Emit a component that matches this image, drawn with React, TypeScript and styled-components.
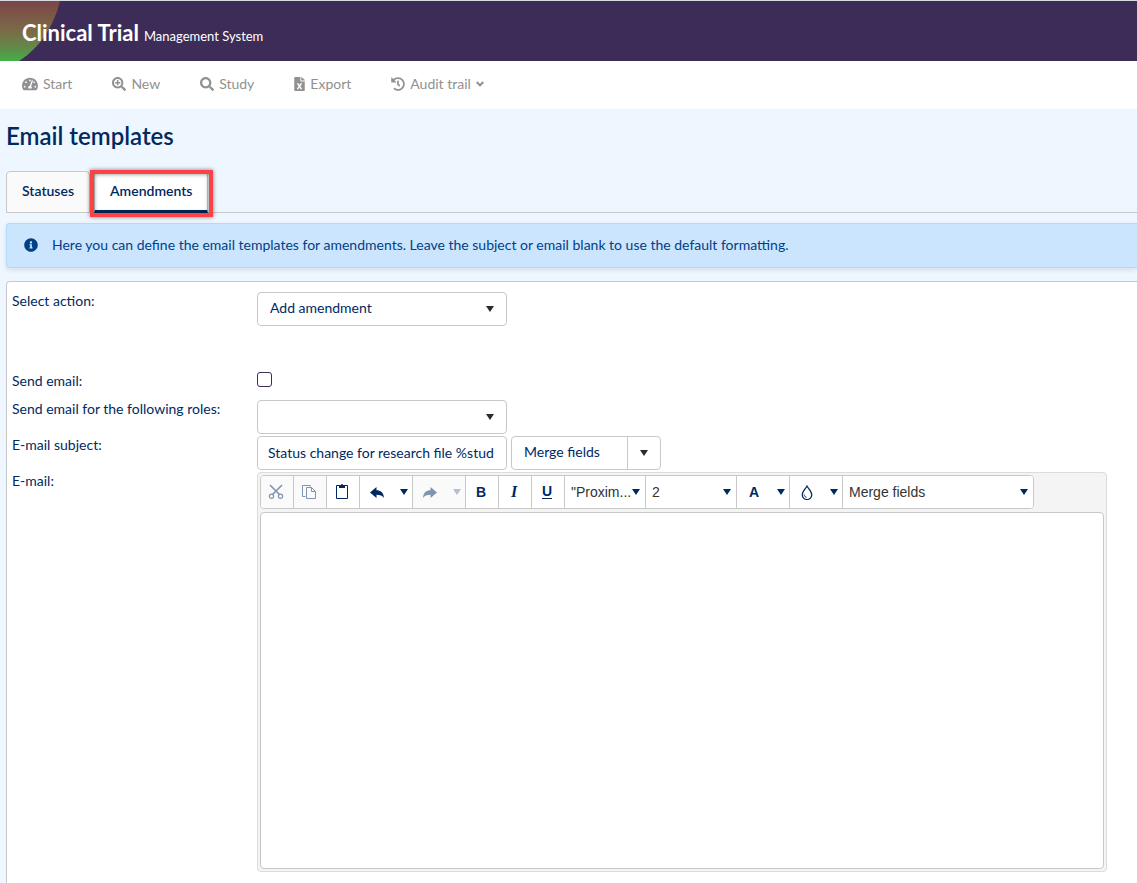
import React from "react";
import styled, { createGlobalStyle, css } from "styled-components";
import { FaTachometerAlt, FaSearchPlus, FaSearch, FaFileExcel, FaHistory, FaInfoCircle } from "react-icons/fa";

const navy = "#00295f";
const line = "#c8c8c8";
const uiFont = `Lato, "Open Sans", sans-serif`;

const GlobalStyle = createGlobalStyle`
  *, *::before, *::after { box-sizing: border-box; }
  body {
    margin: 0;
    background: #eef6ff;
    color: ${navy};
    font: 14px/20px ${uiFont};
    overflow-x: hidden;
  }
  button, input, select, textarea { font: inherit; color: inherit; margin: 0; }
`;

const Page = styled.div`
  display: flex;
  flex-direction: column;
  min-height: 100vh;
`;

const Header = styled.header`
  position: relative;
  display: flex;
  align-items: center;
  height: 61px;
  padding: 6px 22px 0;
  border-top: 1px solid #d5dcdf;
  background: #3d2c57;
  color: #fff;
  overflow: hidden;
`;

const Swirl = styled.svg`
  position: absolute;
  left: 0;
  top: 0;
`;

const Brand = styled.div`
  position: relative;
  display: flex;
  align-items: baseline;
  gap: 5px;
  font-size: 13px;
  line-height: 24px;
`;

const BrandName = styled.strong`
  font-size: 22px;
  font-weight: 700;
`;

const Nav = styled.nav`
  display: flex;
  align-items: center;
  gap: 40px;
  height: 48px;
  padding: 0 22px 2px;
  background: #fff;
`;

const NavLink = styled.a`
  display: flex;
  align-items: center;
  gap: 5px;
  color: #919191;
  text-decoration: none;
`;

const FileIcon = styled(FaFileExcel)`
  width: 11px;
  height: 14px;
`;

const Main = styled.main`
  flex: 1;
  display: flex;
  flex-direction: column;
  padding: 11px 0 0 6px;
`;

const Title = styled.h1`
  margin: 0 0 19px;
  font-size: 24px;
  line-height: 32px;
  font-weight: 600;
`;

const Tabs = styled.div`
  display: flex;
  height: 42px;
  border-bottom: 1px solid ${line};
`;

const Tab = styled.button<{ $active?: boolean }>`
  position: relative;
  height: 42px;
  padding: 0 15px 2px;
  border: 1px solid ${line};
  border-radius: 4px 4px 0 0;
  background: #fafafa;
  font-weight: 600;
  ${(p) =>
    p.$active &&
    css`
      margin-left: 4px;
      padding-bottom: 0;
      background: #fff;
      border-bottom: 3px solid ${navy};
      &::after {
        content: "";
        position: absolute;
        inset: -2px -6px -7px -5px;
        border: 4px solid #fb4244;
        filter: drop-shadow(0 0 2px rgba(0, 0, 0, 0.5));
      }
    `}
`;

const Alert = styled.div`
  display: flex;
  align-items: center;
  gap: 14px;
  height: 45px;
  margin: 10px 0 13px;
  padding: 0 17px 2px;
  border: 1px solid #b5d8fd;
  border-right: 0;
  border-radius: 4px 0 0 4px;
  background: #cce5ff;
  color: #004085;
  box-shadow: 0 2px 5px rgba(0, 0, 0, 0.1);
`;

const Panel = styled.form`
  flex: 1;
  padding: 10px 30px 11px 5px;
  border: 1px solid ${line};
  border-width: 1px 0 0 1px;
  border-radius: 4px 0 0 0;
  background: #fff;
`;

const Row = styled.div<{ $h?: number }>`
  display: grid;
  grid-template-columns: 245px minmax(0, 850px);
  align-items: start;
  min-height: ${(p) => p.$h ?? 36}px;
`;

const Label = styled.label`
  line-height: 18px;
`;

const Fields = styled.div`
  display: flex;
  gap: 4px;
`;

const Dropdown = styled.div`
  position: relative;
  width: 250px;
  height: 34px;
  color: #2b2b2b;
`;

const Select = styled.select<{ $plain?: boolean }>`
  appearance: none;
  width: 100%;
  height: 100%;
  padding: 0 12px 2px;
  border: 1px solid ${line};
  border-radius: 4px;
  background: #fff;
  color: ${navy};
  ${(p) =>
    p.$plain &&
    css`
      padding: 0 6px;
      border: 0;
      background: transparent;
      color: #333;
      font-family: "Liberation Sans", Arial, sans-serif;
    `}
`;

const ArrowSpot = styled.span<{ $right: number }>`
  position: absolute;
  right: ${(p) => p.$right}px;
  top: 0;
  bottom: 0;
  display: flex;
  align-items: center;
  pointer-events: none;
`;

const TextInput = styled.input`
  width: 250px;
  height: 34px;
  padding: 0 10px 2px;
  border: 1px solid ${line};
  border-radius: 4px;
  background: #fff;
`;

const CheckBox = styled.input`
  appearance: none;
  width: 15px;
  height: 15px;
  border: 1px solid #3d2c57;
  border-radius: 3px;
  background: #fff;
`;

const Split = styled.div`
  display: flex;
  width: 150px;
  height: 34px;
  border: 1px solid ${line};
  border-radius: 4px;
`;

const SplitMain = styled.button`
  flex: 1;
  padding: 0 12px 2px;
  border: 0;
  border-right: 1px solid ${line};
  background: transparent;
  text-align: left;
`;

const SplitArrow = styled.button`
  display: grid;
  place-items: center;
  width: 32px;
  padding: 0;
  border: 0;
  background: transparent;
  color: #2b2b2b;
`;

const Editor = styled.div`
  padding: 2px;
  border: 1px solid #dcdcdc;
  border-radius: 4px;
  background: #f4f4f4;
`;

const Toolbar = styled.div`
  display: flex;
  width: max-content;
  height: 34px;
  margin-bottom: 3px;
  border: 1px solid ${line};
  border-radius: 4px;
  background: #fff;
  overflow: hidden;
`;

const Tool = styled.div<{ $w: number; $off?: boolean }>`
  position: relative;
  display: flex;
  width: ${(p) => p.$w}px;
  border-right: 1px solid ${line};
  background: ${(p) => (p.$off ? "#fafafa" : "#fff")};
  color: ${navy};
  &:last-child { border-right: 0; }
`;

const ToolButton = styled.button`
  display: grid;
  place-items: center;
  flex: 1;
  padding: 0 2px 0 0;
  border: 0;
  background: transparent;
  &:disabled { color: #8094af; }
`;

const ToolArrow = styled(ToolButton)`
  flex: 0 0 16px;
  padding: 0;
  &:disabled { color: #b3bfcf; }
`;

const Body = styled.textarea`
  display: block;
  width: 100%;
  height: 357px;
  border: 1px solid ${line};
  border-radius: 4px;
  background: #fff;
  resize: none;
`;

const Triangle = () => (
  <svg width="8" height="6" viewBox="0 0 8 6" fill="currentColor" aria-hidden="true">
    <path d="M0 0h8L4 6z" />
  </svg>
);

const Chevron = () => (
  <svg width="8" height="6" viewBox="0 0 8 6" fill="none" stroke="currentColor" strokeWidth="2" aria-hidden="true">
    <path d="M0.700 1L4 4.300 7.300 1" />
  </svg>
);

const Icon = ({ children }: { children: React.ReactNode }) => (
  <svg width="16" height="16" viewBox="0 0 16 16" fill="none" stroke="currentColor" aria-hidden="true">
    {children}
  </svg>
);

const CutIcon = () => (
  <Icon>
    <path d="M2 1l9.500 9.500M14 1L4.500 10.500" strokeWidth="1.600" />
    <circle cx="3.500" cy="12.300" r="2.100" strokeWidth="1.200" />
    <circle cx="12.500" cy="12.300" r="2.100" strokeWidth="1.200" />
  </Icon>
);

const CopyIcon = () => (
  <Icon>
    <path d="M4.500 12.500h-3v-11h8v1M5.500 3.500h5l4 4v7h-9zM10.500 3.500v4h4" />
  </Icon>
);

const PasteIcon = () => (
  <Icon>
    <path d="M2.500 1.500h11v13h-11z" />
    <path d="M5 4V1h2a1 1 0 0 1 2 0h2v3z" fill="currentColor" stroke="none" />
  </Icon>
);

const UndoIcon = ({ flip }: { flip?: boolean }) => (
  <Icon>
    <path
      d="M1 8.500L7.500 3v3.300c4 0 7 2 7.500 7.700-1.500-2.500-4-3.200-7.500-3.200V14z"
      fill="currentColor"
      stroke="none"
      transform={flip ? "translate(16 0) scale(-1 1)" : undefined}
    />
  </Icon>
);

const DropIcon = () => (
  <Icon>
    <path d="M8 2C6.500 4.800 3.200 7.500 3.200 10.700a4.800 4.800 0 0 0 9.600 0C12.800 7.500 9.500 4.800 8 2z" strokeWidth="1.200" />
    <path d="M5.200 10.500c0 1.600.9 2.500 2.300 2.700" />
  </Icon>
);

const Glyph = styled.span<{ $kind?: "italic" | "underline" }>`
  font: bold 14px/16px "Liberation Sans", Arial, sans-serif;
  ${(p) => p.$kind === "italic" && `font: italic bold 16px/16px "Liberation Serif", serif;`}
  ${(p) => p.$kind === "underline" && `border-bottom: 1px solid; line-height: 13px;`}
`;

export default function App() {
  return (
    <>
      <GlobalStyle />
      <Page>
        <Header>
          <Swirl width="62" height="60" viewBox="0 0 62 60" aria-hidden="true">
            <defs>
              <linearGradient id="swirl" x1="0" y1="0" x2="0" y2="1">
                <stop offset="0" stopColor="#7c4548" />
                <stop offset="0.5" stopColor="#7b6b47" />
                <stop offset="0.8" stopColor="#5f8c48" />
                <stop offset="1" stopColor="#43b04a" />
              </linearGradient>
            </defs>
            <path d="M0 0h60C54 24 41 46 19 60H0z" fill="url(#swirl)" />
          </Swirl>
          <Brand>
            <BrandName>Clinical Trial</BrandName>
            <span>Management System</span>
          </Brand>
        </Header>
        <Nav>
          <NavLink href="#start"><FaTachometerAlt size={16} />Start</NavLink>
          <NavLink href="#new"><FaSearchPlus size={14} />New</NavLink>
          <NavLink href="#study"><FaSearch size={14} />Study</NavLink>
          <NavLink href="#export"><FileIcon />Export</NavLink>
          <NavLink href="#audit"><FaHistory size={14} />Audit trail<Chevron /></NavLink>
        </Nav>
        <Main>
          <Title>Email templates</Title>
          <Tabs role="tablist">
            <Tab role="tab" aria-selected={false}>Statuses</Tab>
            <Tab role="tab" aria-selected $active>Amendments</Tab>
          </Tabs>
          <Alert role="note">
            <FaInfoCircle size={14} />
            <span>
              Here you can define the email templates for amendments. Leave the subject or email blank to use the default formatting.
            </span>
          </Alert>
          <Panel>
            <Row $h={80}>
              <Label htmlFor="action">Select action:</Label>
              <Dropdown>
                <Select id="action"><option>Add amendment</option></Select>
                <ArrowSpot $right={13}><Triangle /></ArrowSpot>
              </Dropdown>
            </Row>
            <Row $h={28}>
              <Label htmlFor="send">Send email:</Label>
              <CheckBox id="send" type="checkbox" />
            </Row>
            <Row>
              <Label htmlFor="roles">Send email for the following roles:</Label>
              <Dropdown>
                <Select id="roles"><option></option></Select>
                <ArrowSpot $right={13}><Triangle /></ArrowSpot>
              </Dropdown>
            </Row>
            <Row>
              <Label htmlFor="subject">E-mail subject:</Label>
              <Fields>
                <TextInput id="subject" defaultValue="Status change for research file %stud" />
                <Split>
                  <SplitMain type="button">Merge fields</SplitMain>
                  <SplitArrow type="button" aria-label="Show merge fields"><Triangle /></SplitArrow>
                </Split>
              </Fields>
            </Row>
            <Row>
              <Label htmlFor="email">E-mail:</Label>
              <Editor>
                <Toolbar role="toolbar">
                  <Tool $w={33} $off><ToolButton type="button" disabled aria-label="Cut"><CutIcon /></ToolButton></Tool>
                  <Tool $w={33} $off><ToolButton type="button" disabled aria-label="Copy"><CopyIcon /></ToolButton></Tool>
                  <Tool $w={33}><ToolButton type="button" aria-label="Paste"><PasteIcon /></ToolButton></Tool>
                  <Tool $w={53}>
                    <ToolButton type="button" aria-label="Undo"><UndoIcon /></ToolButton>
                    <ToolArrow type="button" aria-label="Undo history"><Triangle /></ToolArrow>
                  </Tool>
                  <Tool $w={53} $off>
                    <ToolButton type="button" disabled aria-label="Redo"><UndoIcon flip /></ToolButton>
                    <ToolArrow type="button" disabled aria-label="Redo history"><Triangle /></ToolArrow>
                  </Tool>
                  <Tool $w={33}><ToolButton type="button"><Glyph>B</Glyph></ToolButton></Tool>
                  <Tool $w={33}><ToolButton type="button"><Glyph $kind="italic">I</Glyph></ToolButton></Tool>
                  <Tool $w={33}><ToolButton type="button"><Glyph $kind="underline">U</Glyph></ToolButton></Tool>
                  <Tool $w={81}>
                    <Select $plain aria-label="Font"><option>"Proxim...</option></Select>
                    <ArrowSpot $right={5}><Triangle /></ArrowSpot>
                  </Tool>
                  <Tool $w={91}>
                    <Select $plain aria-label="Font size"><option>2</option></Select>
                    <ArrowSpot $right={5}><Triangle /></ArrowSpot>
                  </Tool>
                  <Tool $w={53}>
                    <ToolButton type="button"><Glyph>A</Glyph></ToolButton>
                    <ToolArrow type="button" aria-label="Text colours"><Triangle /></ToolArrow>
                  </Tool>
                  <Tool $w={53}>
                    <ToolButton type="button" aria-label="Highlight"><DropIcon /></ToolButton>
                    <ToolArrow type="button" aria-label="Highlight colours"><Triangle /></ToolArrow>
                  </Tool>
                  <Tool $w={190}>
                    <Select $plain aria-label="Merge fields"><option>Merge fields</option></Select>
                    <ArrowSpot $right={5}><Triangle /></ArrowSpot>
                  </Tool>
                </Toolbar>
                <Body id="email" />
              </Editor>
            </Row>
          </Panel>
        </Main>
      </Page>
    </>
  );
}
